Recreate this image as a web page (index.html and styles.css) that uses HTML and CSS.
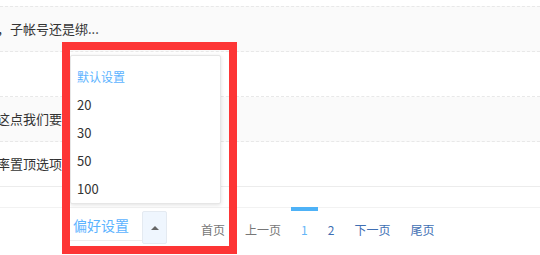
FILE: index.html
```html
<!DOCTYPE html>
<html lang="zh-CN">

<head>
    <meta charset="UTF-8">
    <meta name="viewport" content="width=device-width, initial-scale=1.0">
    <title>偏好设置</title>
    <link rel="stylesheet" href="styles.css">
</head>

<body>
    <!-- 表格的几行，左边的字被截掉了 -->
    <div class="list">
        <div class="row gray first"><span class="txt">，子帐号还是绑...</span></div>
        <div class="row"></div>
        <div class="row gray"><span class="txt">这点我们要</span></div>
        <div class="row last"><span class="txt">率置顶选项</span></div>
    </div>
    <!-- 底部：偏好设置下拉 + 分页 -->
    <div class="foot">
        <div class="select">偏好设置</div>
        <div class="btn"><span class="caret"></span></div>
        <div class="pager">
            <a class="gray-link">首页</a>
            <a class="gray-link">上一页</a>
            <a class="on">1</a>
            <a>2</a>
            <a>下一页</a>
            <a>尾页</a>
        </div>
    </div>
    <!-- 展开的下拉菜单 -->
    <ul class="menu">
        <li class="def">默认设置</li>
        <li>20</li>
        <li>30</li>
        <li>50</li>
        <li>100</li>
    </ul>
    <!-- 红色标注框 -->
    <div class="mark"></div>
</body>

</html>
```

FILE: styles.css
```css
* {
    margin: 0;
    padding: 0;
}

body {
    width: 540px;
    height: 255px;
    overflow: hidden;
    background-color: #fff;
    font-family: "Noto Sans CJK SC", "Microsoft YaHei", sans-serif;
    color: #333;
    position: relative;
}

/* 表格行 */

.list {
    padding-top: 6px;
}

.row {
    height: 44px;
    line-height: 44px;
    font-size: 13px;
    border-bottom: 1px dashed #e8e8e8;
    white-space: nowrap;
    overflow: hidden;
}

.row.first {
    border-top: 1px dashed #e8e8e8;
}

.row.gray {
    background-color: #fafafa;
}

.row.last {
    border-bottom: 1px solid #ececec;
}

.txt {
    display: inline-block;
    margin-left: -3px;
}

/* 底部 */

.foot {
    display: flex;
    align-items: flex-start;
    margin-top: 20px;
    padding-left: 70px;
    border-top: 1px solid #f2f2f2;
    height: 48px;
}

.select {
    width: 69px;
    height: 32px;
    line-height: 34px;
    padding-left: 3px;
    font-size: 14px;
    color: #5cb3ff;
    border-bottom: 1px solid #ededed;
}

.btn {
    width: 23px;
    height: 31px;
    margin-top: 3px;
    background-color: #eff6fe;
    border: 1px solid #e4eaf1;
    border-radius: 2px;
    display: flex;
    align-items: center;
    justify-content: center;
}

.caret {
    width: 0;
    height: 0;
    border-left: 4px solid transparent;
    border-right: 4px solid transparent;
    border-bottom: 4px solid #666;
}

.pager {
    display: flex;
    margin-left: 24px;
    margin-top: -1px;
}

.pager a {
    display: block;
    padding: 0 10px;
    height: 36px;
    line-height: 38px;
    font-size: 12px;
    color: #3f6fb3;
    border-top: 4px solid transparent;
    box-sizing: border-box;
}

.pager a.gray-link {
    color: #777;
}

.pager a.on {
    color: #64b6f7;
    border-top-color: #4eb2f7;
}

/* 下拉菜单 */

.menu {
    position: absolute;
    left: 70px;
    top: 55px;
    width: 151px;
    height: 149px;
    padding-top: 7px;
    box-sizing: border-box;
    list-style: none;
    background-color: #fff;
    border: 1px solid #e6e6e6;
    border-radius: 2px;
    box-shadow: 0 1px 4px rgba(0, 0, 0, .12);
}

.menu li {
    height: 28px;
    line-height: 27px;
    padding-left: 6px;
    font-size: 13px;
    color: #333;
}

.menu li.def {
    color: #5cb3ff;
    font-size: 12px;
}

/* 红框 */

.mark {
    position: absolute;
    left: 62px;
    top: 42px;
    width: 175px;
    height: 212px;
    box-sizing: border-box;
    border: 8px solid #fd3535;
}
```
